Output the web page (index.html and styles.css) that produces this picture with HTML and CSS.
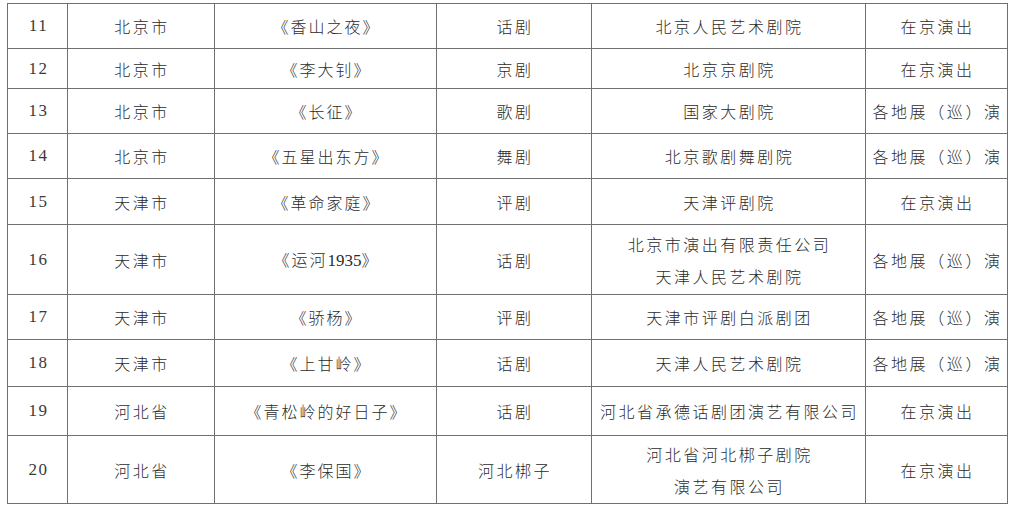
FILE: index.html
```html
<!DOCTYPE html>
<html lang="zh-CN">
<head>
<meta charset="utf-8">
<title>剧目列表</title>
<link rel="stylesheet" href="styles.css">
</head>
<body>
<table class="list">
  <colgroup>
    <col class="c-no"><col class="c-area"><col class="c-title"><col class="c-type"><col class="c-org"><col class="c-mode">
  </colgroup>
  <tbody>
    <tr class="r45"><td class="num">11</td><td>北京市</td><td class="ttl">《香山之夜》</td><td>话剧</td><td>北京人民艺术剧院</td><td>在京演出</td></tr>
    <tr class="r41"><td class="num">12</td><td>北京市</td><td class="ttl">《李大钊》</td><td>京剧</td><td>北京京剧院</td><td>在京演出</td></tr>
    <tr class="r45"><td class="num">13</td><td>北京市</td><td class="ttl">《长征》</td><td>歌剧</td><td>国家大剧院</td><td class="tour">各地展（巡）演</td></tr>
    <tr class="r45"><td class="num">14</td><td>北京市</td><td class="ttl">《五星出东方》</td><td>舞剧</td><td>北京歌剧舞剧院</td><td class="tour">各地展（巡）演</td></tr>
    <tr class="r46"><td class="num">15</td><td>天津市</td><td class="ttl">《革命家庭》</td><td>评剧</td><td>天津评剧院</td><td>在京演出</td></tr>
    <tr class="r70"><td class="num">16</td><td>天津市</td><td class="ttl">《运河<span class="dg">1935</span>》</td><td>话剧</td><td class="two">北京市演出有限责任公司<br>天津人民艺术剧院</td><td class="tour">各地展（巡）演</td></tr>
    <tr class="r45"><td class="num">17</td><td>天津市</td><td class="ttl">《骄杨》</td><td>评剧</td><td>天津市评剧白派剧团</td><td class="tour">各地展（巡）演</td></tr>
    <tr class="r47"><td class="num">18</td><td>天津市</td><td class="ttl">《上甘岭》</td><td>话剧</td><td>天津人民艺术剧院</td><td class="tour">各地展（巡）演</td></tr>
    <tr class="r49"><td class="num">19</td><td>河北省</td><td class="ttl">《青松岭的好日子》</td><td>话剧</td><td>河北省承德话剧团演艺有限公司</td><td>在京演出</td></tr>
    <tr class="r68"><td class="num">20</td><td>河北省</td><td class="ttl">《李保国》</td><td>河北梆子</td><td class="two">河北省河北梆子剧院<br>演艺有限公司</td><td>在京演出</td></tr>
  </tbody>
</table>
</body>
</html>
```

FILE: styles.css
```css
html, body {
  background: #ffffff;
}
body {
  margin: 3px 0 0 7px;
  font-family: "Noto Sans CJK SC", "Noto Sans", sans-serif;
  color: #2b2b2b;
}
.list {
  border-collapse: collapse;
  table-layout: fixed;
  width: 1000px;
}
.c-no { width: 60px; }
.c-area { width: 147px; }
.c-title { width: 222px; }
.c-type { width: 155px; }
.c-org { width: 274px; }
.c-mode { width: 142px; }

.list td {
  border: 1px solid #6f6f6f;
  text-align: center;
  vertical-align: middle;
  padding: 0 0 0 2px;
  font-size: 16px;
  font-weight: 300;
  letter-spacing: 2.5px;
  line-height: 32px;
  white-space: nowrap;
}
.list td.num {
  font-family: "Liberation Serif", serif;
  font-size: 17px;
  letter-spacing: 1.5px;
  font-weight: 400;
  color: #3a3a3a;
}
.list td.ttl {
  letter-spacing: 2px;
}
.list td.tour {
  letter-spacing: 2.6px;
}
.dg {
  font-family: "Liberation Serif", serif;
  font-size: 17px;
  letter-spacing: 0;
}
.r41 td { height: 39px; }
.r45 td { height: 44px; }
.r46 td { height: 45px; }
.r47 td { height: 46px; }
.r49 td { height: 48px; }
.r68 td { height: 67px; }
.r70 td { height: 69px; }
```
